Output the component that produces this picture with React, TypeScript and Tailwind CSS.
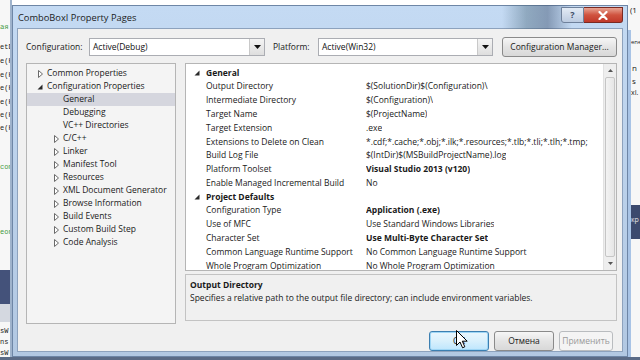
import React from "react";

type TreeItem = { label: string; level: 0 | 1; arrow?: "open" | "closed"; selected?: boolean };

const tree: TreeItem[] = [
  { label: "Common Properties", level: 0, arrow: "closed" },
  { label: "Configuration Properties", level: 0, arrow: "open" },
  { label: "General", level: 1, selected: true },
  { label: "Debugging", level: 1 },
  { label: "VC++ Directories", level: 1 },
  { label: "C/C++", level: 1, arrow: "closed" },
  { label: "Linker", level: 1, arrow: "closed" },
  { label: "Manifest Tool", level: 1, arrow: "closed" },
  { label: "Resources", level: 1, arrow: "closed" },
  { label: "XML Document Generator", level: 1, arrow: "closed" },
  { label: "Browse Information", level: 1, arrow: "closed" },
  { label: "Build Events", level: 1, arrow: "closed" },
  { label: "Custom Build Step", level: 1, arrow: "closed" },
  { label: "Code Analysis", level: 1, arrow: "closed" },
];

type Row = { cat?: string; name?: string; value?: string; bold?: boolean };

const rows: Row[] = [
  { cat: "General" },
  { name: "Output Directory", value: "$(SolutionDir)$(Configuration)\\" },
  { name: "Intermediate Directory", value: "$(Configuration)\\" },
  { name: "Target Name", value: "$(ProjectName)" },
  { name: "Target Extension", value: ".exe" },
  { name: "Extensions to Delete on Clean", value: "*.cdf;*.cache;*.obj;*.ilk;*.resources;*.tlb;*.tli;*.tlh;*.tmp;" },
  { name: "Build Log File", value: "$(IntDir)$(MSBuildProjectName).log" },
  { name: "Platform Toolset", value: "Visual Studio 2013 (v120)", bold: true },
  { name: "Enable Managed Incremental Build", value: "No" },
  { cat: "Project Defaults" },
  { name: "Configuration Type", value: "Application (.exe)", bold: true },
  { name: "Use of MFC", value: "Use Standard Windows Libraries" },
  { name: "Character Set", value: "Use Multi-Byte Character Set", bold: true },
  { name: "Common Language Runtime Support", value: "No Common Language Runtime Support" },
  { name: "Whole Program Optimization", value: "No Whole Program Optimization" },
];

function Closed() {
  return (
    <svg width="5" height="8" viewBox="0 0 5 8">
      <path d="M0.5 0.5 L4.5 4 L0.5 7.5 Z" fill="#fff" stroke="#6a6a6a" strokeWidth="1" />
    </svg>
  );
}

function Open() {
  return (
    <svg width="6" height="6" viewBox="0 0 6 6">
      <path d="M5.5 0.5 L5.5 5.5 L0.5 5.5 Z" fill="#2a2a2a" />
    </svg>
  );
}

function DropArrow() {
  return (
    <div className="flex h-full w-[15px] items-center justify-center border-l border-[#c9c9c9] bg-[linear-gradient(#f4f4f4,#dedede)]">
      <svg width="7" height="4" viewBox="0 0 7 4">
        <path d="M0 0 L7 0 L3.5 4 Z" fill="#111" />
      </svg>
    </div>
  );
}

function Combo({ text, w }: { text: string; w: string }) {
  return (
    <div className={`flex h-[18px] ${w} items-center border border-[#abadb3] bg-white`}>
      <div className="flex-1 pl-[3px] text-[8.5px] text-[#111]">{text}</div>
      <DropArrow />
    </div>
  );
}

function Background() {
  const codeL = [
    { y: 42, t: "etD", c: "text-[#222]" },
    { y: 56, t: "e(H", c: "text-[#222]" },
    { y: 70, t: "e(H", c: "text-[#222]" },
    { y: 83, t: "e(H", c: "text-[#222]" },
    { y: 97, t: "e(H", c: "text-[#222]" },
    { y: 110, t: "e(H", c: "text-[#222]" },
    { y: 123, t: "e(H", c: "text-[#222]" },
    { y: 162, t: "com", c: "text-[#3f9a3f]" },
    { y: 227, t: "eon", c: "text-[#3f9a3f]" },
    { y: 326, t: "sW", c: "text-[#222]" },
    { y: 337, t: "ns", c: "text-[#222]" },
    { y: 348, t: "sW", c: "text-[#222]" },
  ];
  return (
    <>
      <div className="absolute left-0 top-0 h-[360px] w-[12px] bg-[#f7f7f7]" />
      <div className="absolute left-0 top-[270px] h-[34px] w-[12px] bg-[#44527a]" />
      <div className="absolute left-0 top-[304px] h-[18px] w-[12px] bg-[#d4d8e0]" />
      <div className="absolute left-0 top-[22px] text-[7px] text-[#3f9a3f] font-['DejaVu_Sans',sans-serif]">ая</div>
      {codeL.map((c, i) => (
        <div
          key={i}
          className={`absolute left-0 text-[7px] leading-[10px] font-['Liberation_Mono',monospace] ${c.c}`}
          style={{ top: c.y }}
        >
          {c.t}
        </div>
      ))}
      <div className="absolute left-[10px] top-0 h-[360px] w-[2px] bg-[#9fb3cc]" />
      <div className="absolute right-0 top-0 h-[360px] w-[12px] bg-[#f7f7f7]" />
      <div className="absolute right-0 top-[205px] h-[34px] w-[12px] bg-[#3c4a6e]" />
      <div className="absolute left-[628px] top-[30px] h-[330px] w-[3px] bg-[#a9c4e6]" />
      <div className="absolute left-[630px] top-[4px] text-[8px] text-[#111]">(1</div>
      <div className="absolute left-[631px] top-[38px] text-[6px] text-[#222]">ene</div>
      <div className="absolute left-[632px] top-[62px] text-[8px] text-[#222]">n</div>
      <div className="absolute left-[632px] top-[75px] text-[8px] text-[#222]">s</div>
      <div className="absolute left-[631px] top-[88px] text-[7px] text-[#222]">xI.</div>
      <div className="absolute left-[631px] top-[215px] text-[7px] text-[#e6e6e6]">кр</div>
      <div className="absolute left-0 top-[357px] h-[3px] w-[640px] bg-[#5b6b86]" />
    </>
  );
}

function Cursor() {
  return (
    <svg className="absolute left-[456px] top-[330px]" width="13" height="20" viewBox="0 0 13 20">
      <path
        d="M0.5 0.5 L0.5 15.5 L4 12 L6.6 17.8 L8.8 16.8 L6.3 11.2 L11.2 11.2 Z"
        fill="#fff"
        stroke="#000"
        strokeWidth="1"
        strokeLinejoin="round"
      />
    </svg>
  );
}

function Dialog() {
  return (
    <div className="absolute left-[12px] top-[5px] flex h-[352px] w-[616px] flex-col border border-[#6e86a6] bg-[linear-gradient(180deg,#c4daf3,#b2c8e2)] px-[4px] pb-[4px]">
      {/* title bar */}
      <div className="relative flex h-[23px] items-start justify-between">
        <div className="pointer-events-none absolute left-[485px] top-[-1px] h-[24px] w-[70px] bg-[linear-gradient(90deg,rgba(120,150,140,0)_0%,rgba(80,110,130,0.45)_35%,rgba(70,90,120,0.5)_65%,rgba(120,140,170,0)_100%)]" />
        <div className="mt-[5px] pl-[1px] text-[9.3px] text-[#1b1b1b]">ComboBoxI Property Pages</div>
        <div className="relative flex items-start">
          <div className="mt-[1px] flex h-[16px] w-[23px] items-center justify-center rounded-bl-[3px] border border-[#6f819b] bg-[linear-gradient(#e3ebf5,#bccbe0)] text-[9px] font-bold text-[#3d4c66]">
            ?
          </div>
          <div className="mt-[1px] flex h-[16px] w-[39px] items-center justify-center rounded-br-[3px] border border-l-0 border-[#7a2a22] bg-[linear-gradient(#e8a493,#d0533f_50%,#c0392a)]">
            <svg width="10" height="9" viewBox="0 0 10 9">
              <path d="M1.5 1 L8.5 8 M8.5 1 L1.5 8" stroke="#fff" strokeWidth="2.2" strokeLinecap="round" />
            </svg>
          </div>
        </div>
      </div>
      {/* client */}
      <div className="flex flex-1 flex-col border border-[#8da2bd] bg-[#f0f0f0] text-[#1a1a1a]">
        {/* config row */}
        <div className="mt-[8px] flex h-[20px] items-center pl-[8px]">
          <div className="w-[63px] text-[8.5px]">Configuration:</div>
          <Combo text="Active(Debug)" w="w-[176px]" />
          <div className="ml-[8px] w-[45px] text-[8.5px]">Platform:</div>
          <Combo text="Active(Win32)" w="w-[175px]" />
          <div className="ml-[9px] flex h-[20px] w-[115px] items-center justify-center rounded-[3px] border border-[#8a8a8a] bg-[linear-gradient(#f6f6f6,#e4e4e4_50%,#d8d8d8)] text-[8.5px]">
            Configuration Manager...
          </div>
        </div>
        {/* main */}
        <div className="mt-[6px] flex pl-[8px]">
          {/* tree */}
          <div className="h-[261px] w-[150px] border border-[#b5b5b5] bg-[#f4f4f4] pt-[3px]">
            {tree.map((t, i) => (
              <div
                key={i}
                className={`relative flex h-[13px] items-center text-[8.5px] ${t.selected ? "bg-[#d5d6de]" : ""}`}
              >
                <div
                  className={`flex w-[10px] items-center justify-center ${t.level === 0 ? "ml-[8px]" : "ml-[24px]"}`}
                >
                  {t.arrow === "closed" && <Closed />}
                  {t.arrow === "open" && <Open />}
                </div>
                <div className="ml-[2px] whitespace-nowrap">{t.label}</div>
              </div>
            ))}
          </div>
          {/* right column */}
          <div className="ml-[9px] flex w-[432px] flex-col">
            <div className="flex h-[208px] border border-[#b5b5b5] bg-white">
              <div className="flex-1 overflow-hidden pt-[2px]">
                {rows.map((r, i) =>
                  r.cat ? (
                    <div key={i} className="flex h-[13.8px] items-center text-[8.5px] font-bold">
                      <div className="ml-[7px] flex w-[8px] items-center justify-center">
                        <Open />
                      </div>
                      <div className="ml-[5px]">{r.cat}</div>
                    </div>
                  ) : (
                    <div key={i} className="flex h-[13.8px] items-center whitespace-nowrap text-[8.5px]">
                      <div className="w-[180px] shrink-0 pl-[20px]">{r.name}</div>
                      <div className={`overflow-hidden ${r.bold ? "font-bold" : ""}`}>{r.value}</div>
                    </div>
                  )
                )}
              </div>
              {/* scrollbar */}
              <div className="flex w-[13px] flex-col border-l border-[#e2e2e2] bg-[#eeeeee]">
                <div className="flex h-[13px] items-center justify-center">
                  <svg width="5" height="3" viewBox="0 0 5 3">
                    <path d="M0 3 L2.5 0 L5 3 Z" fill="#555" />
                  </svg>
                </div>
                <div className="mx-[1px] flex-1 rounded-[2px] border border-[#c5c5c5] bg-[linear-gradient(90deg,#f3f3f3,#e6e6e6)]" />
                <div className="flex h-[13px] items-center justify-center">
                  <svg width="5" height="3" viewBox="0 0 5 3">
                    <path d="M0 0 L2.5 3 L5 0 Z" fill="#555" />
                  </svg>
                </div>
              </div>
            </div>
            <div className="mt-[3px] h-[47px] border border-[#c3c3c3] bg-[#f0f0f0] px-[4px] pt-[4px] text-[8.5px]">
              <div className="font-bold leading-[12px]">Output Directory</div>
              <div className="leading-[13px]">
                Specifies a relative path to the output file directory; can include environment variables.
              </div>
            </div>
          </div>
        </div>
        {/* buttons */}
        <div className="mt-[7px] flex justify-end pr-[9px]">
          <div className="flex h-[20px] w-[60px] items-center justify-center rounded-[3px] border border-[#3c7fb1] bg-[linear-gradient(#eaf6fd,#d9f0fc_50%,#bee6fd)] text-[8.5px] shadow-[inset_0_0_0_1px_#9fd6f5]">
            OK
          </div>
          <div className="ml-[5px] flex h-[20px] w-[60px] items-center justify-center rounded-[3px] border border-[#8a8a8a] bg-[linear-gradient(#f6f6f6,#e4e4e4_50%,#d8d8d8)] text-[8.5px]">
            Отмена
          </div>
          <div className="ml-[5px] flex h-[20px] w-[54px] items-center justify-center rounded-[3px] border border-[#b9bcbf] bg-[#f4f4f4] text-[8.5px] text-[#9a9a9a]">
            Применить
          </div>
        </div>
      </div>
    </div>
  );
}

export default function App() {
  return (
    <div className="relative h-[360px] w-[640px] overflow-hidden bg-white font-['Open_Sans','Noto_Sans',sans-serif]">
      <Background />
      <Dialog />
      <Cursor />
    </div>
  );
}
